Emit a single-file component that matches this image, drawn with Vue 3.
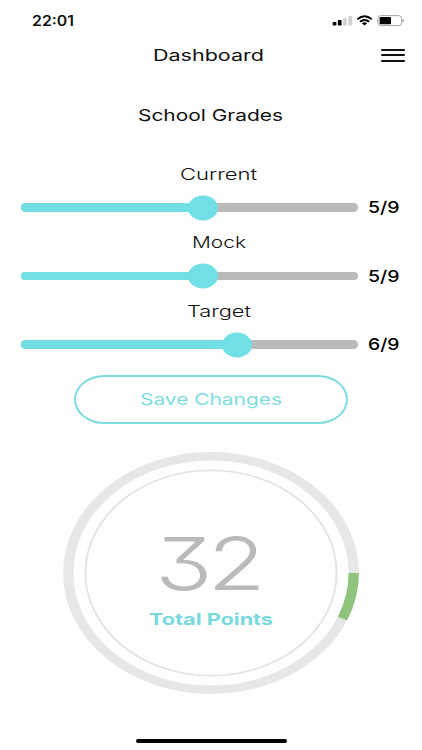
<template>
  <div class="screen">
    <div class="status-bar">
      <FitText text="22:01" :width="42" :size="13.8" class="clock" />
      <svg class="status-icons" width="74" height="14" viewBox="0 0 74 14">
        <rect x="0.7" y="7.9" width="3.7" height="3.7" rx="0.8" fill="#000" />
        <rect x="5.9" y="6" width="3.7" height="5.6" rx="0.8" fill="#000" />
        <rect x="11.1" y="3.9" width="3.7" height="7.7" rx="0.8" fill="#d0d0d0" />
        <rect x="16.3" y="1.9" width="3.7" height="9.7" rx="0.8" fill="#d0d0d0" />
        <g fill="none" stroke="#000" stroke-width="1.9">
          <path d="M25.4 5.2 Q32.5 -0.8 39.8 5.2" />
          <path d="M28 7.8 Q32.5 4.1 37.2 7.8" />
        </g>
        <path d="M29.9 9.2 Q32.5 7.4 35.2 9.2 L32.5 11.6 Z" fill="#000" />
        <rect x="45.8" y="1.6" width="23.8" height="10" rx="3" fill="none" stroke="#999" stroke-width="0.9" />
        <rect x="47.6" y="3.1" width="11.4" height="7.1" rx="1" fill="#000" />
        <path d="M70.8 4.9 Q73 6.6 70.8 8.3 Z" fill="#777" />
      </svg>
    </div>

    <header class="header">
      <FitText text="Dashboard" :width="111" :size="16" class="title" />
      <button type="button" class="menu" aria-label="Menu">
        <span></span>
        <span></span>
        <span></span>
      </button>
    </header>

    <h2 class="heading">
      <FitText text="School Grades" :width="145" :size="16" />
    </h2>

    <section class="grades">
      <div v-for="grade in grades" :key="grade.name" class="grade">
        <FitText :text="grade.name" :width="grade.width" :size="16" class="grade-name" />
        <div class="grade-row">
          <div class="track">
            <div class="fill" :style="{ width: position(grade.value) }"></div>
            <div class="thumb" :style="{ left: position(grade.value) }"></div>
          </div>
          <FitText :text="`${grade.value}/9`" :width="31.5" :size="16.5" class="grade-value" />
        </div>
      </div>
    </section>

    <button type="button" class="save">
      <FitText text="Save Changes" :width="142" :size="16" />
    </button>

    <div class="points">
      <svg class="ring" width="296" height="242" viewBox="0 0 296 296" preserveAspectRatio="none">
        <circle cx="148" cy="148" r="142.8" fill="none" stroke="#e7e7e7" stroke-width="10.2" />
        <circle cx="148" cy="148" r="125.6" fill="none" stroke="#e3e3e3" stroke-width="1.9" />
        <path :d="progressArc" fill="none" stroke="#8fc47c" stroke-width="10.2" />
      </svg>
      <div class="points-text">
        <FitText text="32" :width="105.5" :size="73" class="total" />
        <FitText text="Total Points" :width="124" :size="16" class="total-label" />
      </div>
    </div>

    <div class="home-indicator"></div>
  </div>
</template>

<script setup>
import { h, ref } from 'vue';

// Wide lettering: one line of text stretched to a given width
const FitText = (props) =>
  h('svg', { width: props.width, height: props.size, style: { overflow: 'visible' } }, [
    h(
      'text',
      {
        x: 0,
        y: props.size * 0.86,
        'font-size': props.size,
        textLength: props.width,
        lengthAdjust: 'spacingAndGlyphs',
        fill: 'currentColor',
      },
      props.text
    ),
  ]);
FitText.props = ['text', 'width', 'size'];

const grades = ref([
  { name: 'Current', value: 5, width: 77 },
  { name: 'Mock', value: 5, width: 54 },
  { name: 'Target', value: 6, width: 64 },
]);

// the slider runs from 0 to 9, inset by the round thumb
const position = (value) => `${4 + value * 10}%`;

const angle = (23 * Math.PI) / 180;
const radius = 142.8;
const progressArc = `M${148 + radius} 148 A${radius} ${radius} 0 0 1 ${148 + radius * Math.cos(angle)} ${148 + radius * Math.sin(angle)}`;
</script>

<style>
body {
  margin: 0;
  background-color: #fefefe;
}
</style>

<style scoped>
.screen {
  width: 422px;
  height: 750px;
  display: flex;
  flex-direction: column;
  align-items: center;
  overflow: hidden;
  background-color: #fefefe;
  color: #111;
  font-family: Inter, 'Open Sans', sans-serif;
}

button {
  font: inherit;
  cursor: pointer;
}

.screen svg {
  display: block;
  flex-shrink: 0;
}

.status-bar {
  width: 100%;
  height: 32px;
  box-sizing: border-box;
  padding: 14px 16px 0 31.5px;
  display: flex;
  justify-content: space-between;
}

.clock {
  font-weight: 600;
}

.header {
  width: 100%;
  height: 48px;
  box-sizing: border-box;
  padding: 14.5px 17px 0 153px;
  display: flex;
  justify-content: space-between;
}

.title {
  font-weight: 400;
}

.menu {
  width: 24px;
  height: 13px;
  margin-top: 2px;
  padding: 0;
  border: none;
  background: none;
  display: flex;
  flex-direction: column;
  justify-content: space-between;
}

.menu span {
  width: 24px;
  height: 2px;
  border-radius: 1px;
  background-color: #111;
}

.heading {
  margin: 27px 0 0;
  padding-right: 1px;
  font-weight: 400;
}

.grades {
  width: 100%;
  margin-top: 42.5px;
}

.grade {
  height: 68.5px;
  padding: 0 21px;
  display: flex;
  flex-direction: column;
  align-items: center;
}

.grade-name {
  margin-left: 15px;
  font-weight: 300;
}

.grade-row {
  width: 100%;
  height: 25px;
  margin-top: 13.5px;
  display: flex;
  align-items: center;
}

.track {
  position: relative;
  width: 337px;
  height: 8.6px;
  border-radius: 4.3px;
  background-color: #bababa;
}

.fill {
  height: 100%;
  border-radius: 4.3px 0 0 4.3px;
  background-color: #70dfe6;
}

.thumb {
  position: absolute;
  top: 50%;
  width: 30px;
  height: 25px;
  border-radius: 50%;
  background-color: #70dfe6;
  transform: translate(-50%, -50%);
}

.grade-value {
  margin-left: 10px;
  color: #000;
  font-weight: 500;
}

.save {
  width: 274px;
  height: 49px;
  margin-top: 4px;
  padding: 0 0 1px;
  display: flex;
  align-items: center;
  justify-content: center;
  border: 2px solid #7edce0;
  border-radius: 30px / 24.5px;
  background-color: #fefefe;
  color: #7edce0;
}

.points {
  margin-top: 27.5px;
  display: grid;
  justify-items: center;
}

.ring,
.points-text {
  grid-area: 1 / 1;
}

.points-text {
  padding-top: 75px;
  display: flex;
  flex-direction: column;
  align-items: center;
}

.total {
  margin-right: 7px;
  color: #bababa;
  font-weight: 300;
  font-feature-settings: 'cv09';
  letter-spacing: -4px;
}

.total-label {
  margin-top: 11px;
  color: #79dade;
  font-weight: 700;
}

.home-indicator {
  width: 151px;
  height: 4px;
  margin-top: auto;
  margin-bottom: 7px;
  border-radius: 2px;
  background-color: #000;
}
</style>
